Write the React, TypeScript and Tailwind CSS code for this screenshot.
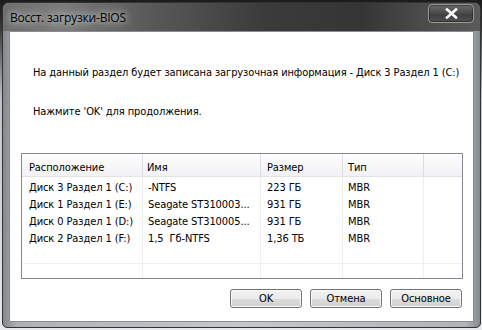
import React from "react";

const rows = [
  ["Диск 3 Раздел 1 (C:)", "-NTFS", "223 ГБ", "MBR"],
  ["Диск 1 Раздел 1 (E:)", "Seagate ST310003...", "931 ГБ", "MBR"],
  ["Диск 0 Раздел 1 (D:)", "Seagate ST310005...", "931 ГБ", "MBR"],
  ["Диск 2 Раздел 1 (F:)", "1,5  Гб-NTFS", "1,36 ТБ", "MBR"],
];

function Btn({ label }: { label: string }) {
  return (
    <div className="w-[72px] h-[19px] rounded-[3px] border border-[#707070] bg-[linear-gradient(#f2f2f2_0%,#ebebeb_50%,#dddddd_50%,#cfcfcf_100%)] shadow-[inset_0_0_0_1px_#fcfcfc] flex items-center justify-center text-[11px] text-black leading-none">
      {label}
    </div>
  );
}

export default function App() {
  const font = { fontFamily: "'DejaVu Sans Condensed', 'DejaVu Sans', sans-serif", letterSpacing: "-0.1px" };
  return (
    <div className="w-[482px] h-[330px] overflow-hidden bg-[linear-gradient(#1c1c1c_0%,#2a2a2a_6%,#bfc3c7_30%,#e6e8ea_100%)] pt-[2px] pl-[2px]">
      <div className="w-[479px] h-[326px] rounded-t-[7px] rounded-b-[5px] border border-[#333] flex flex-col bg-[linear-gradient(90deg,#84888d_0%,#aeb2b7_3%,#c4c8cc_50%,#b0b4b8_97%,#878b90_100%)] overflow-hidden">
        <div className="h-[28px] shrink-0 flex items-start justify-between pl-[7px] pr-[6px] bg-[linear-gradient(90deg,#6d6d6d_0%,#7c7c7c_12%,#5a5a5a_30%,#3b3b3b_55%,#353535_75%,#4b4b4b_88%,#5b5b5b_100%)]">
          <div
            className="mt-[7px] text-[12px] leading-[16px] text-black [text-shadow:0_0_6px_rgba(235,235,235,0.9),0_0_10px_rgba(220,220,220,0.7)]"
            style={{ fontFamily: "'Open Sans', 'Noto Sans', sans-serif", letterSpacing: "-0.2px" }}
          >
            Восст. загрузки-BIOS
          </div>
          <div className="mt-[1px] w-[46px] h-[19px] rounded-[4px] border border-[#9a9a9a] bg-[linear-gradient(#6a6a6a,#4a4a4a_50%,#3e3e3e_51%,#505050)] shadow-[inset_0_0_0_1px_rgba(0,0,0,0.35)] flex items-center justify-center">
            <svg width="13" height="11" viewBox="0 0 13 11">
              <path d="M2 1.5 L11 9.5 M11 1.5 L2 9.5" stroke="#fff" strokeWidth="2.6" strokeLinecap="square" />
            </svg>
          </div>
        </div>
        <div className="flex-1 mx-[6px] mb-[5px] bg-white border border-[#868d95] flex flex-col text-[11px] text-black" style={font}>
          <div className="pl-[23px] pt-[34px] leading-[14px]">
            На данный раздел будет записана загрузочная информация - Диск 3 Раздел 1 (C:)
          </div>
          <div className="pl-[23px] pt-[25px] leading-[14px]">Нажмите 'OK' для продолжения.</div>
          <div className="ml-[11px] mt-[34px] w-[442px] h-[126px] border border-[#828790] relative flex flex-col">
            <div className="absolute inset-0 flex pointer-events-none">
              <div className="w-[121px] border-r border-[#eeeeee]" />
              <div className="w-[118px] border-r border-[#eeeeee]" />
              <div className="w-[82px] border-r border-[#eeeeee]" />
              <div className="w-[81px] border-r border-[#eeeeee]" />
            </div>
            <div className="relative h-[23px] flex bg-[linear-gradient(#ffffff_0%,#f8f8f9_45%,#f1f2f4_100%)] border-b border-[#e2e3e5] leading-[14px]">
              <div className="w-[121px] border-r border-[#dcdde0] pl-[7px] pt-[7px]">Расположение</div>
              <div className="w-[118px] border-r border-[#dcdde0] pl-[4px] pt-[7px]">Имя</div>
              <div className="w-[82px] border-r border-[#dcdde0] pl-[6px] pt-[7px]">Размер</div>
              <div className="w-[81px] border-r border-[#dcdde0] pl-[5px] pt-[7px]">Тип</div>
            </div>
            <div className="relative pt-[2px] flex flex-col">
              {rows.map((r, i) => (
                <div key={i} className="h-[17px] flex items-center leading-[14px] whitespace-pre">
                  <div className="w-[121px] pl-[7px]">{r[0]}</div>
                  <div className="w-[118px] pl-[5px]">{r[1]}</div>
                  <div className="w-[82px] pl-[6px]">{r[2]}</div>
                  <div className="w-[81px] pl-[5px]">{r[3]}</div>
                </div>
              ))}
              <div className="h-[17px] border-b border-[#f0f0f0]" />
            </div>
          </div>
          <div className="mt-[10px] pr-[11px] flex justify-end gap-[8px]">
            <Btn label="OK" />
            <Btn label="Отмена" />
            <Btn label="Основное" />
          </div>
        </div>
      </div>
    </div>
  );
}
